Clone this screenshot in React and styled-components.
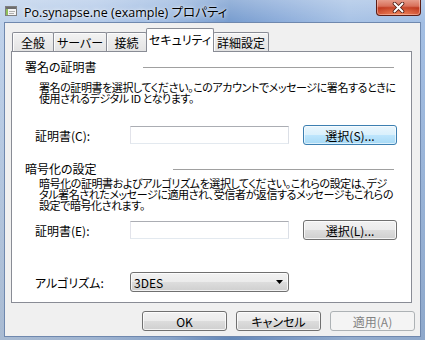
import React from "react";
import styled, { createGlobalStyle, css } from "styled-components";

const GlobalStyle = createGlobalStyle`
  html, body { margin: 0; padding: 0; background: #ffffff; }
  #root { width: 425px; height: 340px; }
`;

const UI_FONT = `"Noto Sans CJK JP", "Liberation Sans", sans-serif`;

const Window = styled.div`
  width: 425px;
  height: 340px;
  box-sizing: border-box;
  display: flex;
  flex-direction: column;
  overflow: hidden;
  font-family: ${UI_FONT};
  font-size: 12px;
  color: #000;
  font-feature-settings: "palt";
  background:
    linear-gradient(180deg, rgba(255, 255, 255, 0.28) 0px, rgba(255, 255, 255, 0.05) 22px, rgba(0, 0, 0, 0.1) 100%),
    linear-gradient(90deg, #bcd0ea 0%, #b1c8e8 22%, #98b6df 40%, #7097cc 54%, #86a8d8 66%, #a3bfe4 82%, #9ebbe2 100%);
`;

const TitleBar = styled.div`
  height: 22px;
  flex: none;
  display: flex;
  align-items: center;
  padding-left: 5px;
`;

const TitleIcon = styled.svg`
  width: 12px;
  height: 12px;
  flex: none;
  margin-right: 7px;
`;

const TitleText = styled.span`
  font-family: "Open Sans", "Noto Sans CJK JP", sans-serif;
  font-size: 12.5px;
  white-space: nowrap;
  color: #000;
  text-shadow: 0 0 5px rgba(255, 255, 255, 0.9), 0 0 2px rgba(255, 255, 255, 0.7);
`;

const CloseButton = styled.div`
  margin-left: auto;
  margin-right: 4px;
  margin-top: -1px;
  align-self: flex-start;
  width: 45px;
  height: 17px;
  box-sizing: border-box;
  border: 1px solid #5c1d14;
  border-top: none;
  border-radius: 0 0 4px 4px;
  background:
    radial-gradient(ellipse 70% 55% at 50% 100%, rgba(255, 160, 110, 0.75), rgba(255, 160, 110, 0) 100%),
    linear-gradient(180deg, #e9a392 0%, #d8705a 45%, #c03a20 55%, #c8432a 100%);
  box-shadow: inset 0 0 0 1px rgba(255, 220, 210, 0.45);
  display: flex;
  align-items: center;
  justify-content: center;
`;

const CloseGlyph = styled.svg`
  width: 13px;
  height: 11px;
`;

const Client = styled.div`
  flex: 1;
  margin: 0 4px 3px;
  background: #f0f0f0;
  border: 1px solid #6f88ae;
  display: flex;
  flex-direction: column;
`;

const TabStrip = styled.div`
  height: 28px;
  box-sizing: border-box;
  padding: 5px 0 0 7px;
  display: flex;
  align-items: flex-end;
  flex: none;
`;

const Tab = styled.div`
  box-sizing: border-box;
  width: ${(p) => p.$w}px;
  height: ${(p) => (p.$active ? 24 : 19)}px;
  margin-bottom: ${(p) => (p.$active ? -1 : 0)}px;
  border: 1px solid #898c95;
  border-bottom: none;
  border-radius: 2px 2px 0 0;
  background: ${(p) => (p.$active ? "#ffffff" : "linear-gradient(180deg, #f3f3f3 0%, #ebebeb 50%, #e3e3e3 100%)")};
  box-shadow: ${(p) => (p.$active ? "none" : "inset 1px 1px 0 #fcfcfc")};
  display: flex;
  align-items: center;
  justify-content: center;
  padding-bottom: ${(p) => (p.$active ? 2 : 0)}px;
  white-space: nowrap;
  position: relative;
  z-index: ${(p) => (p.$active ? 2 : 1)};
  & + & {
    margin-left: -1px;
  }
`;

const Panel = styled.div`
  box-sizing: border-box;
  height: 252px;
  flex: none;
  margin: 0 8px 0 6px;
  border: 1px solid #898c95;
  background: #ffffff;
  padding: 0 13px 0 13px;
  display: flex;
  flex-direction: column;
`;

const GroupHeading = styled.div`
  display: grid;
  grid-template-columns: ${(p) => p.$ruleAt}px 1fr;
  align-items: center;
  height: 12px;
  line-height: 12px;
  margin-top: ${(p) => p.$top}px;
  margin-right: 4px;
  white-space: nowrap;
`;

const HeadingRule = styled.div`
  height: 1px;
  background: #a0a0a0;
`;

const Description = styled.p`
  margin: ${(p) => p.$top}px 0 0 14px;
  font-size: 11px;
  line-height: 11px;
  letter-spacing: -0.42px;
  white-space: nowrap;
`;

const FieldRow = styled.div`
  display: grid;
  grid-template-columns: 81px 159px 94px;
  column-gap: 14px;
  align-items: center;
  height: 20px;
  margin: ${(p) => p.$top}px 0 0 10px;
`;

const FieldLabel = styled.span`
  white-space: nowrap;
`;

const TextBox = styled.input`
  box-sizing: border-box;
  height: 18px;
  width: 100%;
  margin: 0;
  padding: 0 3px;
  border: 1px solid;
  border-color: #abadb3 #dbdfe6 #e3e9ef #e2e3ea;
  background: #ffffff;
  font: inherit;
  outline: none;
`;

const buttonFace = css`
  border: 1px solid #707070;
  border-radius: 3px;
  background: linear-gradient(180deg, #f2f2f2 0%, #ebebeb 50%, #dddddd 50%, #cfcfcf 100%);
  box-shadow: inset 0 0 0 1px rgba(255, 255, 255, 0.75);
`;

const Button = styled.button`
  box-sizing: border-box;
  width: ${(p) => (p.$w ? `${p.$w}px` : "100%")};
  height: 20px;
  margin: 0;
  padding: 0;
  font: inherit;
  color: #000;
  white-space: nowrap;
  ${buttonFace}
  ${(p) =>
    p.$variant === "hot" &&
    css`
      border-color: #3c7fb1;
      background: linear-gradient(180deg, #eaf6fd 0%, #d9f0fc 50%, #bee6fd 50%, #a7d9f5 100%);
      box-shadow: inset 0 0 0 1px rgba(255, 255, 255, 0.6);
    `}
  ${(p) =>
    p.$variant === "disabled" &&
    css`
      border-color: #adb2b5;
      background: #f4f4f4;
      box-shadow: none;
      color: #838383;
    `}
`;

const ComboBox = styled.div`
  box-sizing: border-box;
  height: 20px;
  display: flex;
  align-items: center;
  justify-content: space-between;
  padding: 0 5px 0 3px;
  ${buttonFace}
`;

const ComboArrow = styled.svg`
  width: 7px;
  height: 4px;
`;

const ButtonRow = styled.div`
  display: flex;
  justify-content: flex-end;
  gap: 9px;
  margin-top: 8px;
  padding-right: 5px;
`;

export default function App() {
  return (
    <>
      <GlobalStyle />
      <Window>
        <TitleBar>
          <TitleIcon viewBox="0 0 12 12">
            <rect x="0.5" y="1.5" width="11" height="9" fill="#f4f4f4" stroke="#808080" />
            <rect x="1" y="2" width="10" height="2" fill="#6d6d6d" />
            <rect x="1" y="4" width="2" height="6" fill="#8fbf5a" />
            <rect x="4" y="6" width="6" height="1" fill="#b0b0b0" />
            <rect x="4" y="8" width="5" height="1" fill="#b0b0b0" />
          </TitleIcon>
          <TitleText>Po.synapse.ne (example) プロパティ</TitleText>
          <CloseButton>
            <CloseGlyph viewBox="0 0 13 11">
              <path d="M2.5 1.5 L10.5 9.5 M10.5 1.5 L2.5 9.5" stroke="#4a1a12" strokeWidth="3.6" strokeLinecap="round" />
              <path d="M2.5 1.5 L10.5 9.5 M10.5 1.5 L2.5 9.5" stroke="#ffffff" strokeWidth="2" strokeLinecap="round" />
            </CloseGlyph>
          </CloseButton>
        </TitleBar>
        <Client>
          <TabStrip>
            <Tab $w={42}>全般</Tab>
            <Tab $w={54}>サーバー</Tab>
            <Tab $w={41}>接続</Tab>
            <Tab $w={68} $active>セキュリティ</Tab>
            <Tab $w={56}>詳細設定</Tab>
          </TabStrip>
          <Panel>
            <GroupHeading $top={9} $ruleAt={118}>
              <span>署名の証明書</span>
              <HeadingRule />
            </GroupHeading>
            <Description $top={9}>
              署名の証明書を選択してください。このアカウントでメッセージに署名するときに
              <br />
              使用されるデジタル ID となります。
            </Description>
            <FieldRow $top={21}>
              <FieldLabel>証明書(C):</FieldLabel>
              <TextBox readOnly value="" />
              <Button $variant="hot">選択(S)...</Button>
            </FieldRow>

            <GroupHeading $top={18} $ruleAt={148}>
              <span>暗号化の設定</span>
              <HeadingRule />
            </GroupHeading>
            <Description $top={2.5}>
              暗号化の証明書およびアルゴリズムを選択してください。これらの設定は、デジ
              <br />
              タル署名されたメッセージに適用され、受信者が返信するメッセージもこれらの
              <br />
              設定で暗号化されます。
            </Description>
            <FieldRow $top={9.5}>
              <FieldLabel>証明書(E):</FieldLabel>
              <TextBox readOnly value="" />
              <Button>選択(L)...</Button>
            </FieldRow>
            <FieldRow $top={32}>
              <FieldLabel>アルゴリズム:</FieldLabel>
              <ComboBox>
                <span>3DES</span>
                <ComboArrow viewBox="0 0 7 4">
                  <path d="M0 0 H7 L3.5 4 Z" fill="#000" />
                </ComboArrow>
              </ComboBox>
            </FieldRow>
          </Panel>
          <ButtonRow>
            <Button $w={85}>OK</Button>
            <Button $w={85}>キャンセル</Button>
            <Button $w={85} $variant="disabled">適用(A)</Button>
          </ButtonRow>
        </Client>
      </Window>
    </>
  );
}
